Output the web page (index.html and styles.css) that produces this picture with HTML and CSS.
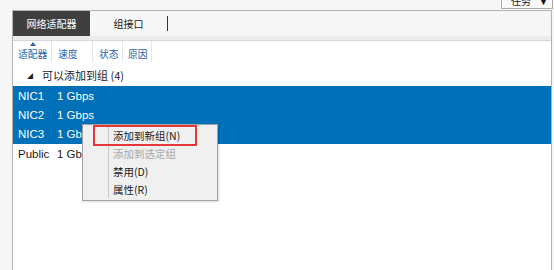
FILE: index.html
```html
<!DOCTYPE html>
<html lang="zh-CN">
<head>
    <meta charset="UTF-8">
    <meta name="viewport" content="width=device-width, initial-scale=1.0">
    <title>网络适配器</title>
    <link rel="stylesheet" href="styles.css">
</head>
<body>
    <div class="topbar">
        <div class="task-button">
            <span>任务</span>
            <span class="task-arrow">▼</span>
        </div>
    </div>

    <div class="panel">
        <div class="tabs">
            <div class="tab active">网络适配器</div>
            <div class="tab">组接口</div>
            <div class="tab-sep"></div>
        </div>
        <div class="tabs-band"></div>

        <div class="list-header">
            <div class="col col-name"><span class="sort-arrow"></span>适配器</div>
            <div class="col col-speed">速度</div>
            <div class="col col-state">状态</div>
            <div class="col col-reason">原因</div>
        </div>

        <div class="group-row">
            <span class="group-arrow">◢</span>
            <span>可以添加到组 (4)</span>
        </div>

        <div class="row selected"><span class="cell-name">NIC1</span><span>1 Gbps</span></div>
        <div class="row selected"><span class="cell-name">NIC2</span><span>1 Gbps</span></div>
        <div class="row selected"><span class="cell-name">NIC3</span><span>1 Gbps</span></div>
        <div class="row"><span class="cell-name">Public</span><span>1 Gbps</span></div>

        <div class="context-menu">
            <div class="menu-item">添加到新组(N)</div>
            <div class="menu-item disabled">添加到选定组</div>
            <div class="menu-item">禁用(D)</div>
            <div class="menu-item">属性(R)</div>
        </div>
        <div class="highlight-box"></div>
    </div>
</body>
</html>
```

FILE: styles.css
```css
body {
    margin: 0;
    width: 554px;
    height: 270px;
    overflow: hidden;
    background-color: #f6f6f6;
    font-family: "Liberation Sans", "Noto Sans CJK SC", sans-serif;
    color: #1a1a1a;
}
.topbar {
    height: 10px;
    display: flex;
    justify-content: flex-end;
    align-items: flex-end;
    overflow: hidden;
}
.task-button {
    height: 17px;
    width: 52px;
    margin-right: 1px;
    margin-bottom: 1px;
    box-sizing: border-box;
    border: 1px solid #a9a9a9;
    border-top: none;
    background-color: #f9f9f9;
    display: flex;
    align-items: flex-end;
    justify-content: space-between;
    padding: 0 4px 0 9px;
    font-size: 10px;
    line-height: 12px;
    margin-top: -8px;
}
.task-arrow {
    font-size: 9px;
    color: #111;
}
.panel {
    position: relative;
    margin-left: 12px;
    width: 540px;
    height: 260px;
    box-sizing: border-box;
    border: 1px solid #b3b3b3;
    border-bottom: none;
    background-color: #fff;
}
.tabs {
    height: 25px;
    display: flex;
    align-items: center;
    background-color: #f6f6f6;
    font-family: "Noto Sans CJK SC", sans-serif;
    font-size: 10px;
}
.tab {
    height: 100%;
    display: flex;
    align-items: center;
    justify-content: center;
    width: 77px;
    color: #222;
}
.tab.active {
    background-color: #3f3f3f;
    color: #fff;
}
.tab-sep {
    width: 1px;
    height: 15px;
    background-color: #333;
}
.tabs-band {
    height: 4px;
    background-color: #ececec;
    border-bottom: 1px solid #d6d6d6;
}
.list-header {
    height: 21px;
    display: flex;
    font-family: "Noto Sans CJK SC", sans-serif;
    font-size: 9.8px;
    color: #2d63a3;
}
.col {
    position: relative;
    box-sizing: border-box;
    padding: 6px 0 0 5px;
    border-right: 1px solid #e6e6e6;
}
.col-name { width: 39px; }
.col-speed { width: 41px; padding-left: 6px; }
.col-state { width: 30px; padding-left: 6px; }
.col-reason { width: 29px; padding-left: 5px; }
/* small sort marker drawn as a css triangle */
.sort-arrow {
    position: absolute;
    left: 17px;
    top: 1px;
    width: 0;
    height: 0;
    border-left: 3px solid transparent;
    border-right: 3px solid transparent;
    border-bottom: 4px solid #2d63a3;
}
.group-row {
    height: 24px;
    display: flex;
    align-items: center;
    padding-top: 2px;
    box-sizing: border-box;
    font-family: "Noto Sans CJK SC", sans-serif;
    font-size: 11px;
    color: #1a1a1a;
}
.group-arrow {
    font-size: 6px;
    margin-left: 14px;
    margin-right: 9px;
    color: #222;
}
.row {
    height: 19.4px;
    display: flex;
    align-items: center;
    font-size: 11.5px;
    padding-left: 5px;
    color: #1a1a1a;
}
.row.selected {
    background-color: #0070b8;
    color: #fff;
}
.cell-name {
    width: 39px;
}
.context-menu {
    position: absolute;
    left: 69px;
    top: 113px;
    width: 136px;
    height: 77px;
    box-sizing: border-box;
    border: 1px solid #a3a3a3;
    background-color: #f0f0f0;
    padding-top: 2px;
    font-family: "Noto Sans CJK SC", sans-serif;
    font-size: 10.5px;
    box-shadow: 1px 1px 2px rgba(0, 0, 0, 0.15);
}
.context-menu::before {
    content: "";
    position: absolute;
    left: 25px;
    top: 2px;
    bottom: 2px;
    width: 1px;
    background-color: #c8c8c8;
}
.menu-item {
    height: 18px;
    line-height: 18px;
    padding-left: 30px;
    color: #1a1a1a;
}
.menu-item.disabled {
    color: #a6a6a6;
}
.highlight-box {
    position: absolute;
    left: 80px;
    top: 114px;
    width: 104px;
    height: 21px;
    box-sizing: border-box;
    border: 2px solid #e5383b;
}
```
